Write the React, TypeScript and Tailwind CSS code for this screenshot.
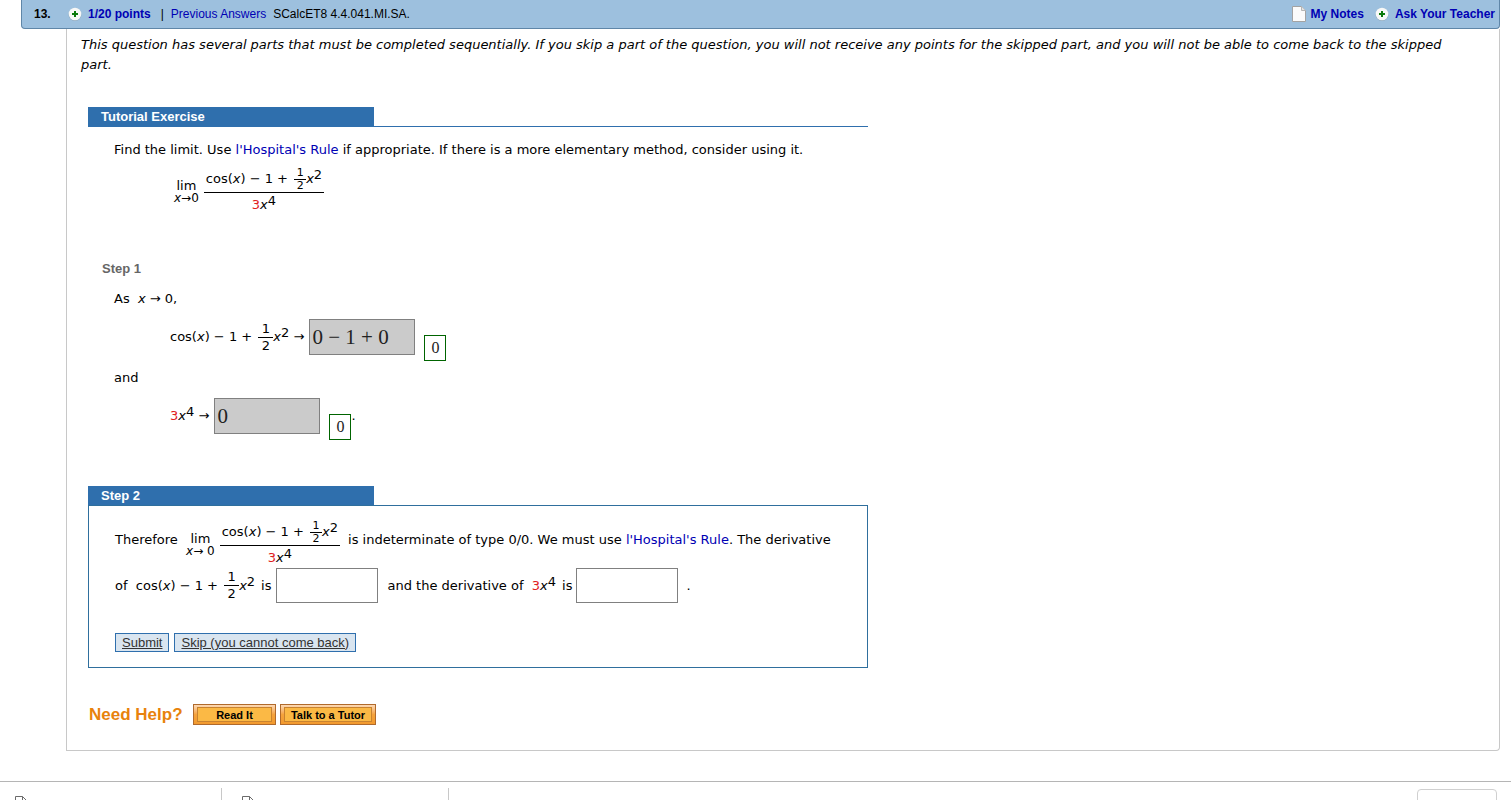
import type { ReactNode } from "react";

function PlusIcon() {
  return (
    <svg width="14" height="14" viewBox="0 0 14 14" className="shrink-0" aria-hidden="true">
      <circle cx="7" cy="7.5" r="6.5" fill="#8fa9bd" />
      <circle cx="7" cy="7" r="6.3" fill="#f7f8f7" />
      <path d="M7 4v6M4 7h6" stroke="#0b7a0b" strokeWidth="2" />
    </svg>
  );
}

function NoteIcon() {
  return (
    <svg width="14" height="16" viewBox="0 0 14 16" className="shrink-0" aria-hidden="true">
      <path d="M.5.5h9l4 4v11H.5z" fill="#fbfbfb" stroke="#a3a3a3" />
      <path d="M9.5.5v4h4" fill="#e4e4e4" stroke="#b5b5b5" />
    </svg>
  );
}

function FileIcon() {
  return (
    <svg width="12" height="16" viewBox="0 0 12 16" className="shrink-0" aria-hidden="true">
      <path d="M.5.5h7l4 4v11H.5zM7.5.5v4h4" fill="#fff" stroke="#6b6b6b" />
    </svg>
  );
}

function Half({ small }: { small?: boolean }) {
  return (
    <span
      className={
        small
          ? "ml-0.5 flex w-3 flex-col text-center text-[11px] leading-3"
          : "ml-0.5 flex w-[15px] flex-col text-center text-[13px] leading-4"
      }
    >
      <span className="border-b border-black">1</span>
      <span>2</span>
    </span>
  );
}

function Power({ exp }: { exp: number }) {
  return (
    <span>
      <i>x</i>
      <sup className="-top-1 text-[13px]">{exp}</sup>
    </span>
  );
}

function Numerator({ small }: { small?: boolean }) {
  return (
    <span className="flex items-center whitespace-pre">
      <span>
        cos(<i>x</i>) − 1 +{" "}
      </span>
      <Half small={small} />
      <Power exp={2} />
    </span>
  );
}

function Denominator() {
  return (
    <span className="flex items-center">
      <span className="text-[#e02020]">3</span>
      <Power exp={4} />
    </span>
  );
}

function Limit({ arrow }: { arrow: string }) {
  return (
    <span className="flex items-center gap-[5px]">
      <span className="flex flex-col items-center leading-3">
        <span>lim</span>
        <span className="whitespace-pre text-xs leading-3">
          <i>x</i>
          {arrow}0
        </span>
      </span>
      <span className="flex flex-col items-center">
        <span className="flex h-[27px] items-center border-b border-black px-0.5">
          <Numerator small />
        </span>
        <span className="flex h-6 items-center">
          <Denominator />
        </span>
      </span>
    </span>
  );
}

function SectionTitle({ children }: { children: ReactNode }) {
  return (
    <h2 className="h-5 w-[286px] max-w-full bg-[#2f6fad] px-[13px] font-['Liberation_Sans',sans-serif] text-[13px] leading-5 font-bold text-white">
      {children}
    </h2>
  );
}

function GivenAnswer({ label, value }: { label: string; value: string }) {
  return (
    <>
      <input
        aria-label={label}
        defaultValue={value}
        readOnly
        className="h-9 w-[106px] border border-[#808080] bg-[#cbcbcb] px-[2px] font-['Liberation_Serif',serif] text-[21px] text-[#222]"
      />
      <span className="mt-4 ml-[9px] flex h-[26px] w-[22px] items-center justify-center border border-[#006400] font-['Liberation_Serif',serif] text-base text-[#222]">
        0
      </span>
    </>
  );
}

function AnswerBox({ label }: { label: string }) {
  return <input aria-label={label} className="mx-1 h-[35px] w-[102px] border border-[#808080] bg-white px-1 text-lg" />;
}

function HelpButton({ className, children }: { className: string; children: ReactNode }) {
  return (
    <button
      type="button"
      className={`${className} h-[21px] border border-[#b06a2c] bg-linear-to-b from-[#fcd9b4] via-[#f5a33c] to-[#f29a2e] px-[3px] py-[2px] font-['Liberation_Sans',sans-serif] text-[11px] font-bold text-black`}
    >
      <span className="flex h-full items-center justify-center border border-[#c98330] bg-[#fbb945]">{children}</span>
    </button>
  );
}

function RuleLink() {
  return (
    <a href="#rule" className="text-[#0000b4]">
      l'Hospital's Rule
    </a>
  );
}

export default function App() {
  return (
    <div className="min-h-screen bg-white font-['DejaVu_Sans',sans-serif] text-[13px] leading-5 text-black">
      <header className="mr-[11px] ml-[21px] flex h-[29px] items-center rounded-b-sm border border-t-0 border-[#5f86a8] bg-[#9dc0de] pr-1 pl-3 font-['Liberation_Sans',sans-serif] text-xs">
        <span className="w-[34px] font-bold">13.</span>
        <PlusIcon />
        <a href="#points" className="ml-[6px] font-bold text-[#0000b4]">
          1/20 points
        </a>
        <span className="mr-[7px] ml-[10px]">|</span>
        <a href="#answers" className="text-[#0000b4]">
          Previous Answers
        </a>
        <span className="ml-[7px]">SCalcET8 4.4.041.MI.SA.</span>
        <nav className="ml-auto flex items-center font-bold text-[#0000b4]">
          <NoteIcon />
          <a href="#notes" className="ml-[5px]">
            My Notes
          </a>
          <span className="ml-[11px] flex">
            <PlusIcon />
          </span>
          <a href="#teacher" className="ml-[6px]">
            Ask Your Teacher
          </a>
        </nav>
      </header>

      <main className="mr-[11px] ml-[66px] rounded-br border border-t-0 border-[#c8c8c8] pb-[25px]">
        <p className="pt-[6px] pr-10 pl-[14px] italic">
          This question has several parts that must be completed sequentially. If you skip a part of the question, you
          will not receive any points for the skipped part, and you will not be able to come back to the skipped part.
        </p>

        <div className="mt-8 ml-[21px] max-w-[780px]">
          <section>
            <div className="border-b border-[#2f6fad]">
              <div className="-mb-px">
                <SectionTitle>Tutorial Exercise</SectionTitle>
              </div>
            </div>
            <p className="mt-[13px] pl-[26px]">
              Find the limit. Use <RuleLink /> if appropriate. If there is a more elementary method, consider using it.
            </p>
            <div className="mt-[6px] flex pl-[86px]">
              <Limit arrow="→" />
            </div>
          </section>

          <section className="mt-[42px]">
            <h2 className="pl-[14px] font-['Liberation_Sans',sans-serif] text-[13px] font-bold text-[#666]">Step 1</h2>
            <div className="pl-[26px]">
              <p className="mt-[10px] whitespace-pre">
                As  <i>x</i> → 0,
              </p>
              <div className="mt-[10px] flex items-start pl-14">
                <span className="flex h-9 items-center pr-px whitespace-pre">
                  <Numerator />
                  <span> → </span>
                </span>
                <GivenAnswer label="Limit of the numerator" value="0 − 1 + 0" />
              </div>
              <p className="mt-[7px]">and</p>
              <div className="mt-[10px] flex items-start pl-14">
                <span className="flex h-9 items-center pr-px whitespace-pre">
                  <Denominator />
                  <span> → </span>
                </span>
                <GivenAnswer label="Limit of the denominator" value="0" />
                <span className="mt-2">.</span>
              </div>
            </div>
          </section>

          <section className="mt-[46px]">
            <SectionTitle>Step 2</SectionTitle>
            <div className="-mt-px border border-[#2f6f9d] px-[26px] pt-[13px] pb-[15px]">
              <div className="flex items-start whitespace-pre">
                <span className="pt-[11px]">Therefore  </span>
                <Limit arrow="→ " />
                <span className="pt-[11px] pl-2">
                  is indeterminate of type 0/0. We must use <RuleLink />. The derivative
                </span>
              </div>
              <div className="-mt-[2px] flex items-center whitespace-pre">
                <span>of  </span>
                <Numerator />
                <span className="pl-[6px]">is</span>
                <AnswerBox label="Derivative of the numerator" />
                <span className="pl-[6px]">and the derivative of  </span>
                <Denominator />
                <span className="pl-[6px]">is</span>
                <AnswerBox label="Derivative of the denominator" />
                <span className="pl-1">.</span>
              </div>
              <div className="mt-[30px] flex gap-[5px] font-['Liberation_Sans',sans-serif] text-[13px] leading-4 text-[#333]">
                <button type="button" className="h-[19px] border border-[#2f6fad] bg-[#d9e5f0] px-[6px] underline">
                  Submit
                </button>
                <button type="button" className="h-[19px] border border-[#2f6fad] bg-[#d9e5f0] px-[6px] underline">
                  Skip (you cannot come back)
                </button>
              </div>
            </div>
          </section>

          <div className="mt-9 flex items-center gap-1 font-['Liberation_Sans',sans-serif]">
            <span className="w-[101px] pl-px text-[17px] font-bold text-[#e8820c]">Need Help?</span>
            <HelpButton className="w-[83px]">Read It</HelpButton>
            <HelpButton className="w-24">Talk to a Tutor</HelpButton>
          </div>
        </div>
      </main>

      <footer className="mt-[30px] flex h-[19px] overflow-hidden border-t border-[#b5b5b5] pt-[6px]">
        <div className="w-[222px] border-r border-[#c8c8c8] pt-2 pl-[15px]">
          <FileIcon />
        </div>
        <div className="w-[227px] border-r border-[#c8c8c8] pt-2 pl-5">
          <FileIcon />
        </div>
        <div className="mt-px mr-[14px] ml-auto h-8 w-20 rounded border border-[#d0d0d0]" />
      </footer>
    </div>
  );
}
